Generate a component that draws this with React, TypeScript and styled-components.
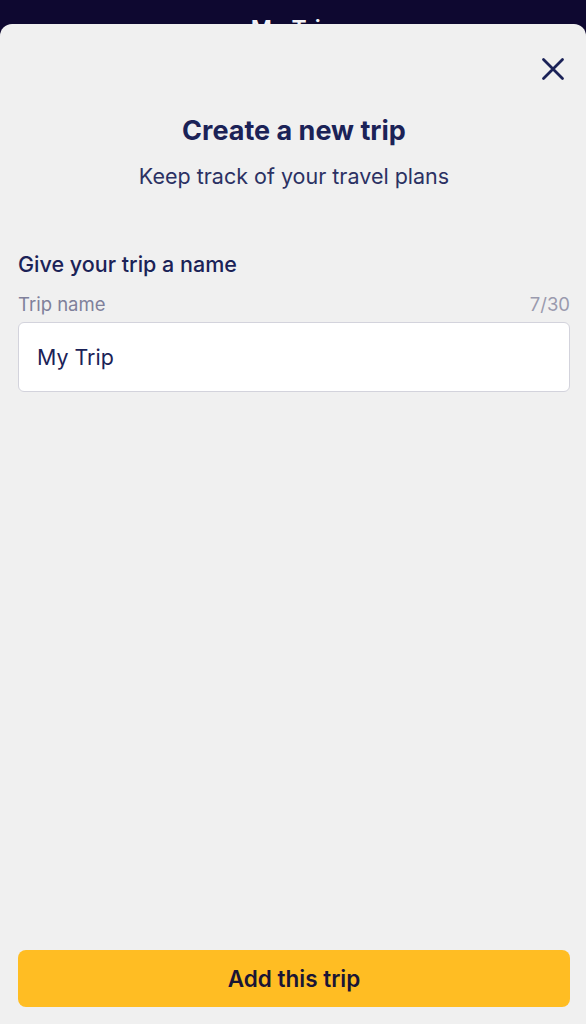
import React, { useState } from 'react';
import styled, { createGlobalStyle } from 'styled-components';

const MAX_LENGTH = 30;

const GlobalStyle = createGlobalStyle`
  html, body {
    margin: 0;
    padding: 0;
    height: 100%;
    background: #0e0830;
  }

  #root {
    height: 100%;
  }

  * {
    box-sizing: border-box;
  }
`;

const CloseIcon: React.FC = () => (
  <svg width="24" height="24" viewBox="0 0 24 24" fill="none">
    <path
      d="M2.5 2.5 L21.5 21.5 M21.5 2.5 L2.5 21.5"
      stroke="#1b2257"
      strokeWidth="2.8"
      strokeLinecap="round"
    />
  </svg>
);

const App: React.FC = () => {
  const [name, setName] = useState<string>('My Trip');

  return (
    <Page>
      <GlobalStyle />
      <TopBar>
        <TopTitle>My Trip</TopTitle>
      </TopBar>
      <Sheet>
        <CloseRow>
          <CloseButton type="button" aria-label="Close">
            <CloseIcon />
          </CloseButton>
        </CloseRow>
        <Heading>
          <Title>Create a new trip</Title>
          <Subtitle>Keep track of your travel plans</Subtitle>
        </Heading>
        <Section>
          <SectionTitle>Give your trip a name</SectionTitle>
          <LabelRow>
            <Label htmlFor="trip-name">Trip name</Label>
            <Counter>
              {name.length}/{MAX_LENGTH}
            </Counter>
          </LabelRow>
          <Input
            id="trip-name"
            value={name}
            maxLength={MAX_LENGTH}
            onChange={(e) => setName(e.target.value)}
          />
        </Section>
        <Spacer />
        <SubmitButton type="button">Add this trip</SubmitButton>
      </Sheet>
    </Page>
  );
};

export default App;

const Page = styled.div`
  display: flex;
  flex-direction: column;
  height: 100%;
  font-family: Inter, "Noto Sans", sans-serif;
`;

const TopBar = styled.header`
  height: 24px;
  overflow: hidden;
  display: flex;
  justify-content: center;
  background: #0e0830;
`;

const TopTitle = styled.span`
  padding-top: 17px;
  font-size: 23px;
  font-weight: 600;
  color: #f2f2f6;
  line-height: 24px;
`;

const Sheet = styled.main`
  flex: 1;
  display: flex;
  flex-direction: column;
  background: #f0f0f0;
  border-radius: 12px 12px 0 0;
  padding: 33px 16px 17px 18px;
`;

const CloseRow = styled.div`
  display: flex;
  justify-content: flex-end;
`;

const CloseButton = styled.button`
  display: flex;
  align-items: center;
  justify-content: center;
  width: 24px;
  height: 24px;
  padding: 0;
  margin-right: 5px;
  border: none;
  background: none;
  cursor: pointer;
`;

const Heading = styled.div`
  display: flex;
  flex-direction: column;
  align-items: center;
  margin-top: 33px;
`;

const Title = styled.h1`
  margin: 0;
  font-size: 27px;
  font-weight: 700;
  line-height: 34px;
  color: #1b2257;
`;

const Subtitle = styled.p`
  margin: 14px 0 0;
  font-size: 21.5px;
  font-weight: 400;
  line-height: 28px;
  color: #2b3163;
`;

const Section = styled.section`
  display: flex;
  flex-direction: column;
  margin-top: 60px;
`;

const SectionTitle = styled.h2`
  margin: 0;
  font-size: 21.5px;
  font-weight: 500;
  line-height: 28px;
  color: #1b2257;
`;

const LabelRow = styled.div`
  display: flex;
  justify-content: space-between;
  align-items: center;
  margin-top: 14px;
`;

const Label = styled.label`
  font-size: 18.5px;
  line-height: 24px;
  color: #7f809b;
`;

const Counter = styled.span`
  font-size: 18.5px;
  line-height: 24px;
  color: #9a9aae;
`;

const Input = styled.input`
  margin-top: 6px;
  height: 70px;
  width: 100%;
  padding: 0 18px;
  border: 1.5px solid #d3d3dc;
  border-radius: 6px;
  background: #ffffff;
  font-family: inherit;
  font-size: 21.4px;
  color: #1b2257;
  outline: none;
`;

const Spacer = styled.div`
  flex: 1;
`;

const SubmitButton = styled.button`
  height: 57px;
  width: 100%;
  border: none;
  border-radius: 8px;
  background: #ffbd23;
  font-family: inherit;
  font-size: 22.5px;
  font-weight: 600;
  color: #1a1535;
  cursor: pointer;
`;
